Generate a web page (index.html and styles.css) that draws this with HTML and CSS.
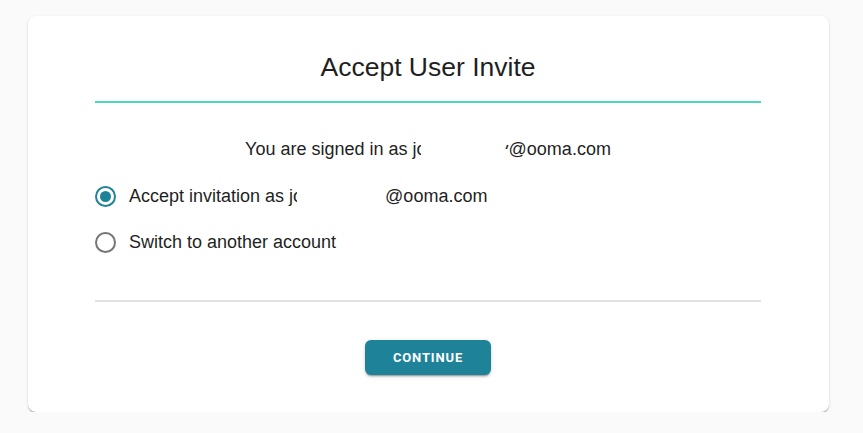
FILE: index.html
```html
<!DOCTYPE html>
<html lang="en">
<head>
<meta charset="utf-8">
<title>Accept User Invite</title>
<link rel="stylesheet" href="styles.css">
</head>
<body>
<main class="card">
  <h1 class="title">Accept User Invite</h1>
  <div class="accent-rule"></div>
  <p class="signed-in">You are signed in as j<span class="clip-l">o</span><span class="redact redact-a"></span><span class="clip-r">y</span>@ooma.com</p>
  <div class="options">
    <label class="option">
      <span class="radio checked"><span class="dot"></span></span>
      <span class="option-text">Accept invitation as j<span class="clip-l">o</span><span class="redact redact-b"></span>@ooma.com</span>
    </label>
    <label class="option">
      <span class="radio"></span>
      <span class="option-text">Switch to another account</span>
    </label>
  </div>
  <div class="divider"></div>
  <div class="actions">
    <button class="btn-continue" type="button">Continue</button>
  </div>
</main>
</body>
</html>
```
FILE: styles.css
```css
html, body {
  margin: 0;
  padding: 0;
}
body {
  background: #fafafa;
  font-family: "Liberation Sans", Arial, sans-serif;
  color: #1f1f1f;
  padding: 16px 0 0 28px;
}
.card {
  box-sizing: border-box;
  width: 801px;
  height: 396px;
  background: #fff;
  border-radius: 8px;
  box-shadow: 0 2px 1px -1px rgba(0,0,0,0.22), 0 1px 1px 0 rgba(0,0,0,0.16), 0 1px 3px 0 rgba(0,0,0,0.12);
  padding: 36px 68px 37px 67px;
  display: flex;
  flex-direction: column;
}
.title {
  margin: 0;
  font-weight: 400;
  font-size: 26.5px;
  line-height: 30px;
  text-align: center;
  color: #1f1f1f;
}
.accent-rule {
  margin-top: 19px;
  height: 2px;
  background: #4cd6be;
}
.signed-in {
  margin: 35px 0 0;
  font-size: 18px;
  line-height: 22px;
  text-align: center;
  white-space: nowrap;
}
.clip-l {
  display: inline-block;
  width: 4px;
  overflow: hidden;
  vertical-align: bottom;
}
.clip-r {
  display: inline-block;
  width: 4px;
  height: 11px;
  overflow: hidden;
  vertical-align: top;
  direction: rtl;
  line-height: 22px;
}
.redact {
  display: inline-block;
  height: 1px;
}
.redact-a { width: 84px; }
.redact-b { width: 88px; }
.options {
  margin-top: 25px;
  display: flex;
  flex-direction: column;
  gap: 24px;
}
.option {
  display: flex;
  align-items: center;
  gap: 13px;
  height: 22px;
  font-size: 18px;
  line-height: 22px;
  white-space: nowrap;
}
.radio {
  box-sizing: border-box;
  width: 21px;
  height: 21px;
  border: 2px solid #757575;
  border-radius: 50%;
  display: flex;
  align-items: center;
  justify-content: center;
  flex: none;
}
.radio.checked {
  border-color: #1e8299;
}
.dot {
  width: 11px;
  height: 11px;
  border-radius: 50%;
  background: #1e8299;
}
.divider {
  margin-top: 47px;
  height: 2px;
  background: #e2e2e2;
}
.actions {
  margin-top: 38px;
  display: flex;
  justify-content: center;
}
.btn-continue {
  width: 126px;
  height: 35px;
  border: none;
  border-radius: 6px;
  background: #1e8299;
  color: #fff;
  font-family: Roboto, "Liberation Sans", sans-serif;
  font-weight: 700;
  font-size: 13px;
  letter-spacing: 0.85px;
  text-transform: uppercase;
  box-shadow: 0 3px 1px -2px rgba(0,0,0,0.2), 0 2px 2px 0 rgba(0,0,0,0.14), 0 1px 5px 0 rgba(0,0,0,0.12);
  padding: 0;
}
```
